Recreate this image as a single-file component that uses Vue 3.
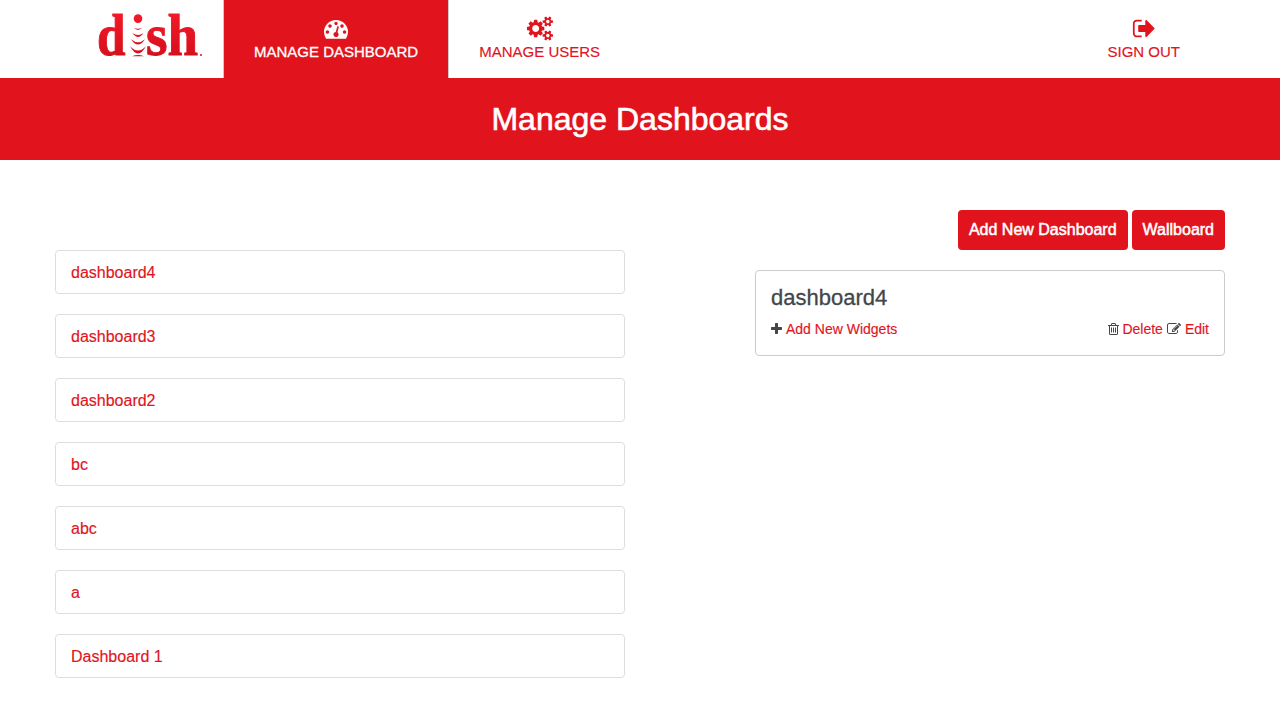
<script setup>
import { ref } from 'vue'

const dashboards = ['dashboard4', 'dashboard3', 'dashboard2', 'bc', 'abc', 'a', 'Dashboard 1']
const selected = ref(dashboards[0])
</script>

<template>
  <div class="page">
    <header class="nav">
      <a class="brand" aria-label="dish">
        <svg width="106" height="54" viewBox="0 0 106 54">
          <defs>
            <linearGradient id="logo-red" gradientUnits="userSpaceOnUse" x1="0" y1="0" x2="0" y2="46">
              <stop offset="0" stop-color="#f41a28" />
              <stop offset="1" stop-color="#d40f1c" />
            </linearGradient>
          </defs>
          <g fill="url(#logo-red)" class="letters">
            <text x="0" y="43.400" textLength="28.500" lengthAdjust="spacingAndGlyphs">d</text>
            <text x="49" y="43.400" textLength="21.500" lengthAdjust="spacingAndGlyphs">s</text>
            <text x="70.500" y="43.400" textLength="30.500" lengthAdjust="spacingAndGlyphs">h</text>
          </g>
          <g fill="url(#logo-red)">
            <circle cx="41" cy="6.600" r="4.300" />
            <path d="M36.700 15.600Q41 18 45.300 15.600Q41 20.400 36.700 15.600Z" />
            <path d="M35.400 21Q41 25.200 46.600 21Q41 29 35.400 21Z" />
            <path d="M34 27.200Q41 33.200 48 27.200Q41 38 34 27.200Z" />
            <path d="M33 34.200Q41 42.600 49 34.200Q41 48.600 33 34.200Z" />
            <path d="M35 44.200Q41 41.600 47 44.200Z" />
            <circle cx="104" cy="43" r="1" />
          </g>
        </svg>
      </a>
      <a class="tab active">
        <svg class="fa" width="24" height="25" viewBox="0 0 1792 1792"><path d="M384 1152q0-53-37.500-90.500t-90.500-37.500-90.500 37.500-37.500 90.500 37.500 90.500 90.500 37.500 90.500-37.500 37.500-90.500zm192-448q0-53-37.500-90.500t-90.500-37.500-90.500 37.500-37.500 90.500 37.500 90.500 90.500 37.500 90.500-37.500 37.500-90.500zm428 481l101-382q6-26-7.500-48.500t-38.500-29.500-48 6.500-30 39.500l-101 382q-60 5-107 43.500t-63 98.500q-20 77 20 146t117 89 146-20 89-117q16-60-6-117t-72-91zm660-33q0-53-37.500-90.500t-90.500-37.500-90.500 37.500-37.500 90.500 37.500 90.500 90.500 37.500 90.500-37.500 37.500-90.500zm-640-640q0-53-37.500-90.500t-90.500-37.500-90.500 37.500-37.500 90.500 37.500 90.500 90.500 37.500 90.500-37.500 37.500-90.500zm448 192q0-53-37.500-90.500t-90.500-37.500-90.500 37.500-37.500 90.500 37.500 90.500 90.500 37.500 90.500-37.500 37.500-90.500zm320 448q0 261-141 483-19 29-54 29h-1402q-35 0-54-29-141-221-141-483 0-182 71-348t191-286 286-191 348-71 348 71 286 191 191 286 71 348z" /></svg>
        <span>MANAGE DASHBOARD</span>
      </a>
      <a class="tab">
        <svg class="fa" width="26" height="25" viewBox="0 0 1920 1792"><path d="M896 896q0-106-75-181t-181-75-181 75-75 181 75 181 181 75 181-75 75-181zm768 512q0-52-38-90t-90-38-90 38-38 90q0 53 37.500 90.500t90.500 37.500 90.500-37.500 37.500-90.500zm0-1024q0-52-38-90t-90-38-90 38-38 90q0 53 37.500 90.500t90.500 37.500 90.500-37.500 37.500-90.500zm-384 421v185q0 10-7 19.500t-16 10.500l-155 24q-11 35-32 76 34 48 90 115 7 11 7 20 0 12-7 19-23 30-82.500 89.500t-78.500 59.500q-11 0-21-7l-115-90q-37 19-77 31-11 108-23 155-7 24-30 24h-186q-11 0-20-7.500t-10-17.500l-23-153q-34-10-75-31l-118 89q-7 7-20 7-11 0-21-8-144-133-144-160 0-9 7-19 10-14 41-53t47-61q-23-44-35-82l-152-24q-10-1-17-9.500t-7-19.500v-185q0-10 7-19.500t16-10.500l155-24q11-35 32-76-34-48-90-115-7-11-7-20 0-12 7-20 22-30 82-89t79-59q11 0 21 7l115 90q34-18 77-32 11-108 23-154 7-24 30-24h186q11 0 20 7.500t10 17.500l23 153q34 10 75 31l118-89q8-7 20-7 11 0 21 8 144 133 144 160 0 8-7 19-12 16-42 54t-45 60q23 48 34 82l152 23q10 2 17 10.500t7 19.500zm640 533v140q0 16-149 31-12 27-30 52 51 113 51 138 0 4-4 7-122 71-124 71-8 0-46-47t-52-68q-20 2-30 2t-30-2q-14 21-52 68t-46 47q-2 0-124-71-4-3-4-7 0-25 51-138-18-25-30-52-149-15-149-31v-140q0-16 149-31 13-29 30-52-51-113-51-138 0-4 4-7 4-2 35-20t59-34 30-16q8 0 46 46.500t52 67.500q20-2 30-2t30 2q51-71 92-112l6-2q4 0 124 70 4 3 4 7 0 25-51 138 17 23 30 52 149 15 149 31zm0-1024v140q0 16-149 31-12 27-30 52 51 113 51 138 0 4-4 7-122 71-124 71-8 0-46-47t-52-68q-20 2-30 2t-30-2q-14 21-52 68t-46 47q-2 0-124-71-4-3-4-7 0-25 51-138-18-25-30-52-149-15-149-31v-140q0-16 149-31 13-29 30-52-51-113-51-138 0-4 4-7 4-2 35-20t59-34 30-16q8 0 46 46.500t52 67.500q20-2 30-2t30 2q51-71 92-112l6-2q4 0 124 70 4 3 4 7 0 25-51 138 17 23 30 52 149 15 149 31z" /></svg>
        <span>MANAGE USERS</span>
      </a>
      <a class="tab sign-out">
        <svg class="fa" width="23" height="25" viewBox="0 0 1664 1792"><path d="M704 1440q0 4 1 20t.5 26.500-3 23.500-10 19.500-20.500 6.500h-320q-119 0-203.500-84.500t-84.500-203.500v-704q0-119 84.500-203.500t203.500-84.500h320q13 0 22.500 9.500t9.500 22.500q0 4 1 20t.5 26.500-3 23.500-10 19.500-20.500 6.500h-320q-66 0-113 47t-47 113v704q0 66 47 113t113 47h312l11.500 1 11.500 3 8 5.500 7 9 2 13.500zm928-544q0 26-19 45l-544 544q-19 19-45 19t-45-19-19-45v-288h-448q-26 0-45-19t-19-45v-384q0-26 19-45t45-19h448v-288q0-26 19-45t45-19 45 19l544 544q19 19 19 45z" /></svg>
        <span>SIGN OUT</span>
      </a>
    </header>

    <h1 class="title">Manage Dashboards</h1>

    <main class="content">
      <ul class="list">
        <li v-for="name in dashboards" :key="name" class="item" @click="selected = name">{{ name }}</li>
      </ul>

      <section class="side">
        <div class="buttons">
          <button class="btn">Add New Dashboard</button>
          <button class="btn">Wallboard</button>
        </div>
        <article class="card">
          <h2>{{ selected }}</h2>
          <div class="actions">
            <svg class="fa" width="11" height="14" viewBox="192 0 1408 1792"><path d="M1600 736v192q0 40-28 68t-68 28h-416v416q0 40-28 68t-68 28h-192q-40 0-68-28t-28-68v-416h-416q-40 0-68-28t-28-68v-192q0-40 28-68t68-28h416v-416q0-40 28-68t68-28h192q40 0 68 28t28 68v416h416q40 0 68 28t28 68z" /></svg>
            <a>Add New Widgets</a>
            <svg class="fa trash" width="11" height="14" viewBox="192 0 1408 1792"><path d="M704 736v576q0 14-9 23t-23 9h-64q-14 0-23-9t-9-23v-576q0-14 9-23t23-9h64q14 0 23 9t9 23zm256 0v576q0 14-9 23t-23 9h-64q-14 0-23-9t-9-23v-576q0-14 9-23t23-9h64q14 0 23 9t9 23zm256 0v576q0 14-9 23t-23 9h-64q-14 0-23-9t-9-23v-576q0-14 9-23t23-9h64q14 0 23 9t9 23zm128 724v-948h-896v948q0 22 7 40.500t14.500 27 10.500 8.500h832q3 0 10.500-8.500t14.500-27 7-40.500zm-672-1076h448l-48-117q-7-9-17-11h-317q-10 2-17 11zm928 32v64q0 14-9 23t-23 9h-96v948q0 83-47 143.500t-113 60.500h-832q-66 0-113-58.500t-47-141.500v-952h-96q-14 0-23-9t-9-23v-64q0-14 9-23t23-9h309l70-167q15-37 54-63t79-26h320q40 0 79 26t54 63l70 167h309q14 0 23 9t9 23z" /></svg>
            <a>Delete</a>
            <svg class="fa" width="14" height="14" viewBox="0 0 1792 1792"><path d="M888 1184l116-116-152-152-116 116v56h96v96h56zm440-720q-16-16-33 1l-350 350q-17 17-1 33t33-1l350-350q17-17 1-33zm80 594v190q0 119-84.500 203.500t-203.500 84.500h-832q-119 0-203.500-84.500t-84.500-203.500v-832q0-119 84.500-203.500t203.500-84.500h832q63 0 117 25 15 7 18 23 3 17-9 29l-49 49q-14 14-32 8-23-6-45-6h-832q-66 0-113 47t-47 113v832q0 66 47 113t113 47h832q66 0 113-47t47-113v-126q0-13 9-22l64-64q15-15 35-7t20 29zm-96-738l288 288-672 672h-288v-288zm444 132l-92 92-288-288 92-92q28-28 68-28t68 28l152 152q28 28 28 68t-28 68z" /></svg>
            <a>Edit</a>
          </div>
        </article>
      </section>
    </main>
  </div>
</template>

<style>
body {
  background: #fff;
  overflow: hidden;
}
</style>

<style scoped>
.page {
  box-sizing: border-box;
  font-family: "Liberation Sans", Arial, sans-serif;
  font-size: 16px;
  color: #434648;
  -webkit-text-stroke: 0.15px currentColor;
}
.fa {
  display: block;
  flex: none;
  fill: currentColor;
}
.nav {
  display: flex;
  box-sizing: border-box;
  height: 78px;
  padding: 0 70px 0 97px;
}
.brand {
  width: 126px;
  padding-top: 12px;
}
.brand svg {
  display: block;
  overflow: visible;
}
.letters {
  font-family: "Liberation Serif", "Times New Roman", serif;
  font-weight: bold;
  font-size: 60px;
  stroke: url(#logo-red);
  stroke-width: 1px;
  -webkit-text-stroke: 1px #e1141e;
}
.tab {
  display: flex;
  flex-direction: column;
  align-items: center;
  box-sizing: border-box;
  padding: 16px 30px 0;
  border-left: 1px solid #ccc;
  color: #e1141e;
  font-size: 15px;
  line-height: 21px;
  white-space: nowrap;
}
.tab.active {
  background: #e1141e;
  color: #fff;
  -webkit-text-stroke: 0.3px #fff;
}
.sign-out {
  margin-left: auto;
  border-left: 0;
}
.title {
  margin: 0;
  height: 82px;
  background: #e1141e;
  color: #fff;
  font-size: 32px;
  font-weight: 400;
  line-height: 82px;
  text-align: center;
  -webkit-text-stroke: 0.6px #fff;
}
.content {
  display: flex;
  justify-content: space-between;
  align-items: flex-start;
  padding: 50px 55px 0;
}
.list {
  display: flex;
  flex-direction: column;
  gap: 20px;
  width: 570px;
  margin: 40px 0 0;
  padding: 0;
  list-style: none;
}
.item {
  box-sizing: border-box;
  height: 44px;
  padding: 0 15px;
  border: 1px solid #ddd;
  border-radius: 4px;
  color: #e1141e;
  line-height: 43px;
}
.side {
  width: 470px;
}
.buttons {
  display: flex;
  justify-content: flex-end;
  gap: 4px;
}
.btn {
  height: 40px;
  padding: 0 11px;
  border: 0;
  border-radius: 4px;
  background: #e1141e;
  color: #fff;
  font: inherit;
  -webkit-text-stroke: 0.5px #fff;
}
.card {
  box-sizing: border-box;
  height: 86px;
  margin-top: 20px;
  padding: 14px 15px;
  border: 1px solid #ccc;
  border-radius: 4px;
}
.card h2 {
  margin: 0;
  font-size: 22px;
  font-weight: 400;
  line-height: 26px;
  -webkit-text-stroke: 0.3px currentColor;
}
.actions {
  display: flex;
  align-items: center;
  gap: 4px;
  margin-top: 8px;
  font-size: 14px;
  line-height: 20px;
}
.actions a {
  color: #e1141e;
  -webkit-text-stroke: 0.15px #e1141e;
}
.trash {
  margin: 0 -1px 0 auto;
}
</style>
